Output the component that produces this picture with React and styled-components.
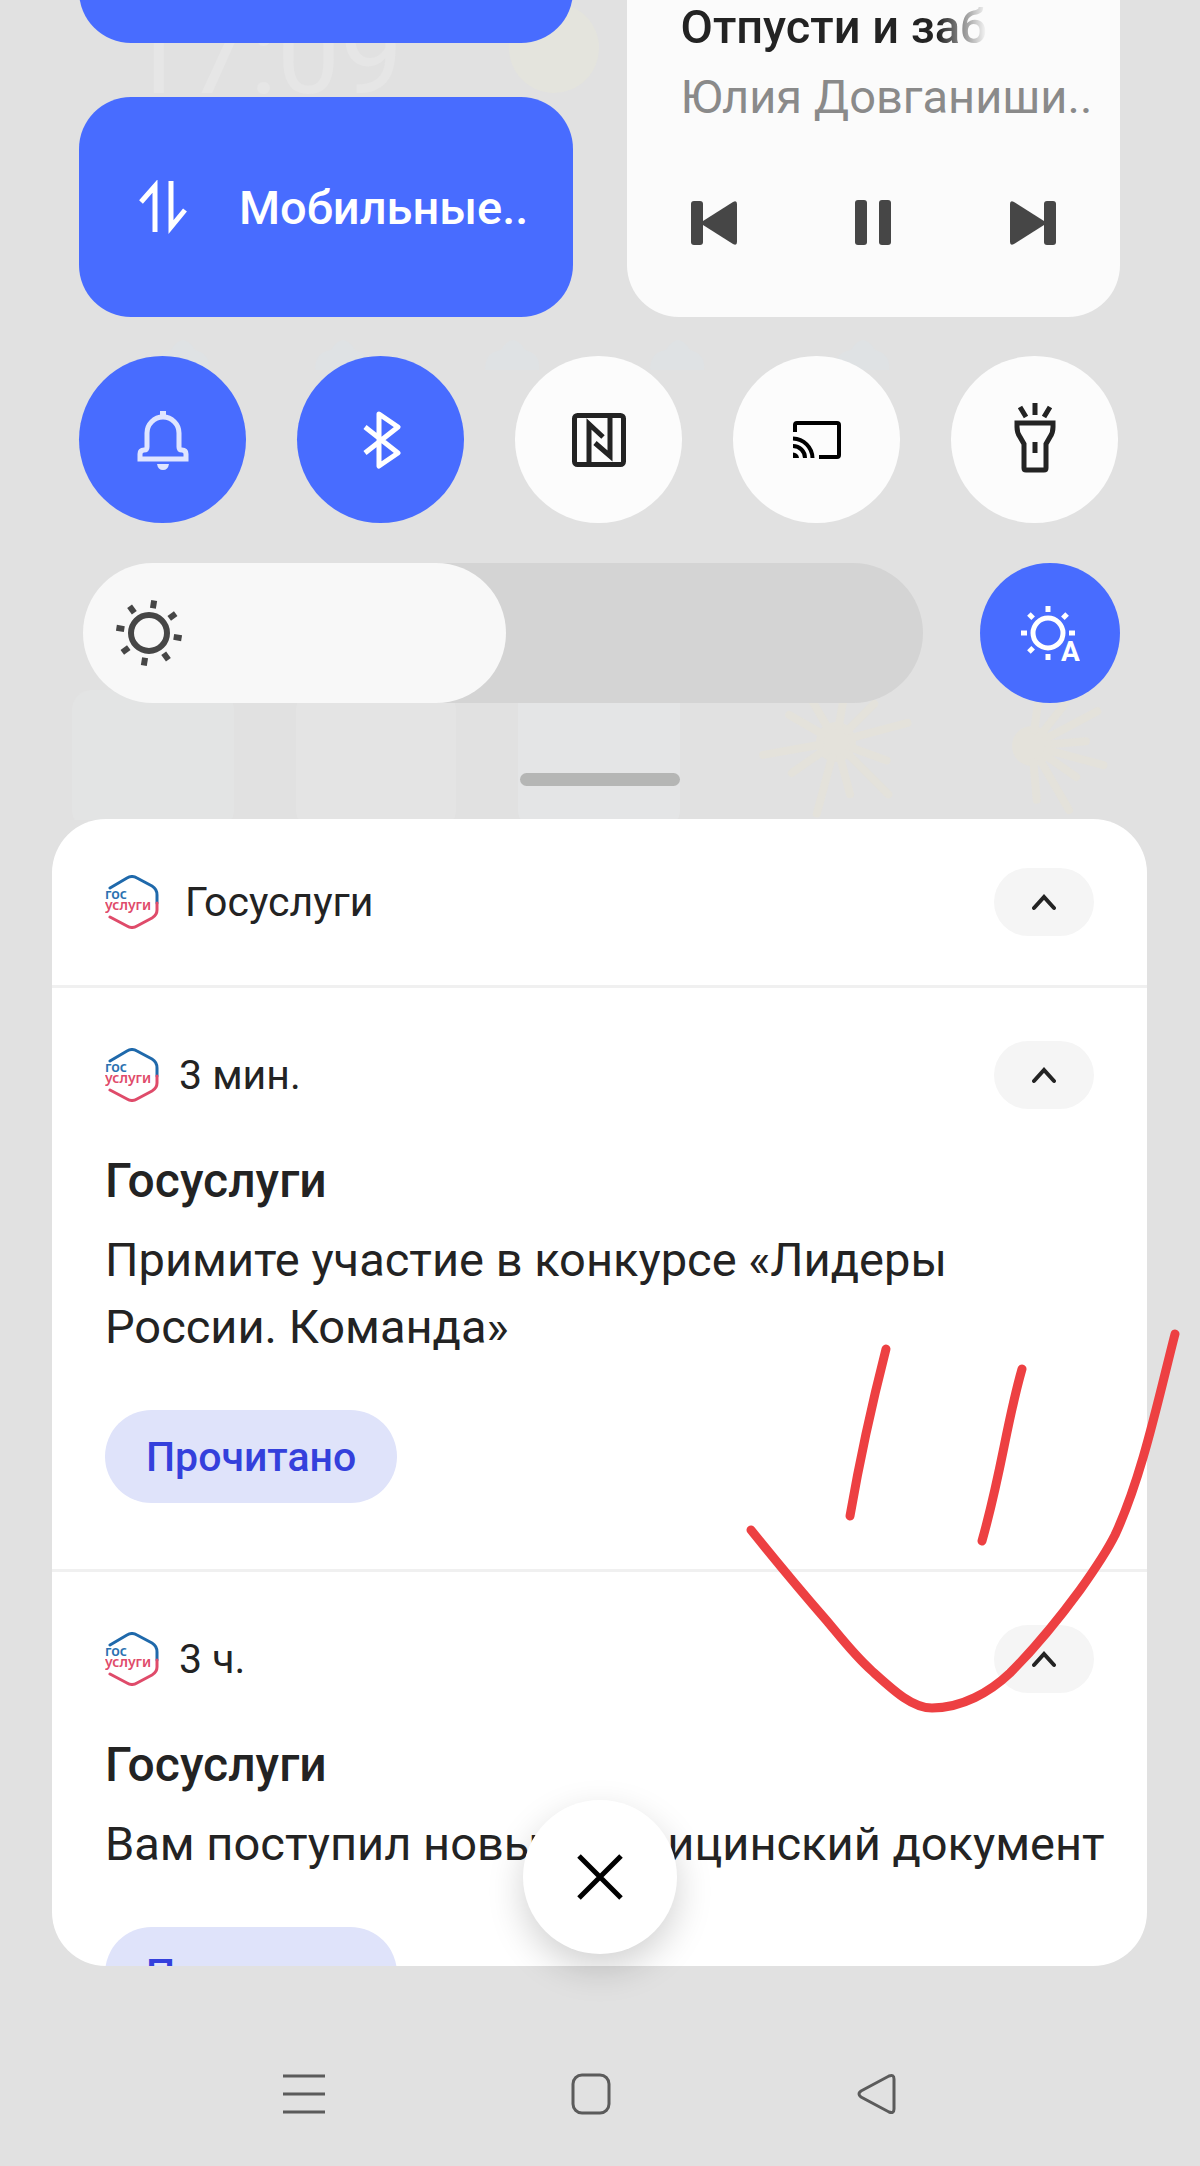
import React, { useState } from 'react';
import styled, { createGlobalStyle } from 'styled-components';

const GlobalStyle = createGlobalStyle`
  * {
    box-sizing: border-box;
  }

  body {
    margin: 0;
    background: #e1e1e1;
    font-family: Roboto, "Liberation Sans", sans-serif;
    color: #232323;
  }

  button {
    border: 0;
    padding: 0;
    font: inherit;
    color: inherit;
    cursor: pointer;
  }

  svg {
    display: block;
  }
`;

const Screen = styled.div`
  position: relative;
  display: flex;
  flex-direction: column;
  height: 100vh;
  overflow: hidden;
`;

const Wallpaper = styled.svg`
  position: absolute;
  top: 0;
  left: 0;
  z-index: -1;
`;

const QuickSettings = styled.section`
  flex: none;
  display: flex;
  flex-direction: column;
  padding: 0 80px 0 79px;
`;

/* the shade is scrolled, so the first row of tiles starts above the screen */
const Tiles = styled.div`
  display: grid;
  grid-template-columns: repeat(2, minmax(0, 1fr));
  grid-template-rows: 220px 220px;
  gap: 54px;
  margin-top: -177px;
`;

const Tile = styled.button`
  display: flex;
  align-items: center;
  gap: 52px;
  padding: 0 32px 0 60px;
  border-radius: 52px;
  background: #486cff;
  color: #fff;
  font-size: 47px;
  font-weight: 500;
  text-align: left;
  white-space: nowrap;
`;

const MediaCard = styled.article`
  grid-column: 2;
  grid-row: 1 / 3;
  display: flex;
  flex-direction: column;
  justify-content: flex-end;
  padding: 0 32px 72px 54px;
  border-radius: 52px;
  background: #fbfbfb;
  white-space: nowrap;
`;

const Track = styled.div`
  width: 306px;
  overflow: hidden;
  font-size: 47px;
  line-height: 70px;
  font-weight: 500;
  mask-image: linear-gradient(to right, #000 84%, transparent);
`;

const Artist = styled.div`
  font-size: 47px;
  line-height: 70px;
  color: #8a8a8a;
`;

const Controls = styled.div`
  display: flex;
  justify-content: space-between;
  margin-top: 68px;
  padding: 0 32px 0 10px;
  color: #464646;
`;

const PlainButton = styled.button`
  background: none;
`;

const Toggles = styled.div`
  display: flex;
  justify-content: space-between;
  margin-top: 39px;
  padding-right: 2px;
`;

const RoundButton = styled.button`
  flex: none;
  display: grid;
  place-items: center;
  width: ${props => props.$size}px;
  height: ${props => props.$size}px;
  border-radius: 50%;
  background: ${props => (props.$on ? '#486cff' : '#fcfcfc')};
  color: ${props => (props.$on ? '#fff' : '#232323')};
`;

const BrightnessRow = styled.div`
  display: flex;
  gap: 57px;
  margin-top: 40px;
  padding-left: 4px;
`;

const SliderBox = styled.label`
  flex: 1;
  display: grid;
  align-items: center;

  > * {
    grid-area: 1 / 1;
  }

  > svg {
    margin-left: 32px;
    color: #464646;
    pointer-events: none;
  }
`;

const Slider = styled.input`
  appearance: none;
  width: 100%;
  height: 140px;
  margin: 0;
  border-radius: 70px;
  overflow: hidden;
  background: linear-gradient(to right, #f8f8f8 var(--fill), #d4d4d4 var(--fill));

  &::-webkit-slider-thumb {
    appearance: none;
    width: 140px;
    height: 140px;
    border-radius: 50%;
    background: #f8f8f8;
  }
`;

const Handle = styled.div`
  align-self: center;
  width: 160px;
  height: 13px;
  margin: 70px 0 33px;
  border-radius: 7px;
  background: #b5b6b5;
`;

const Sheet = styled.main`
  flex: 1;
  min-height: 0;
  overflow: hidden;
  margin: 0 53px 0 52px;
  border-radius: 54px;
  background: #fff;
`;

const Group = styled.header`
  display: flex;
  align-items: center;
  gap: 26px;
  height: 169px;
  padding: 0 53px;
  border-bottom: 3px solid #f0f0f0;
  font-size: 41px;
`;

const Notice = styled.article`
  padding: 53px 53px 66px;
  border-bottom: 3px solid #f0f0f0;
`;

const NoticeHead = styled.div`
  display: flex;
  align-items: center;
  gap: 20px;
  height: 68px;
  font-size: 41px;
`;

const Collapse = styled.button`
  display: grid;
  place-items: center;
  width: 100px;
  height: 68px;
  margin-left: auto;
  border-radius: 34px;
  background: #f5f5f5;
`;

const Title = styled.h2`
  margin: 38px 0 12px;
  font-size: 48px;
  line-height: 67px;
  font-weight: 500;
`;

const Text = styled.p`
  margin: 0 -30px 0 0;
  font-size: 47px;
  line-height: 67px;
`;

const ReadButton = styled.button`
  height: 93px;
  margin-top: 50px;
  padding: 0 41px;
  border-radius: 47px;
  background: #dfe3fa;
  color: #3440dc;
  font-size: 41px;
  font-weight: 500;
`;

const CloseButton = styled.button`
  position: absolute;
  left: 50%;
  bottom: 212px;
  display: grid;
  place-items: center;
  width: 154px;
  height: 154px;
  transform: translateX(-50%);
  border-radius: 50%;
  background: #fff;
  color: #000;
  box-shadow: 0 14px 36px rgba(0, 0, 0, 0.18);
`;

const NavBar = styled.nav`
  flex: none;
  display: flex;
  justify-content: center;
  align-items: center;
  gap: 246px;
  height: 200px;
  padding: 56px 20px 0 0;
  color: #5b5b5b;
`;

const Marker = styled.svg`
  position: absolute;
  top: 1320px;
  left: 740px;
  pointer-events: none;
`;

const Stroke = ({ w, h, width = 5, children }) => (
  <svg
    width={w}
    height={h}
    viewBox={`0 0 ${w} ${h}`}
    fill="none"
    stroke="currentColor"
    strokeWidth={width}
    aria-hidden="true"
  >
    {children}
  </svg>
);

const DataIcon = () => (
  <Stroke w={48} h={54}>
    <path d="M2 22L16 6V52" />
    <path d="M32 1V47L46 30" />
  </Stroke>
);

const SkipIcon = ({ next }) => (
  <svg width="46" height="44" viewBox="0 0 46 44" fill="currentColor" aria-hidden="true">
    <g transform={next ? 'matrix(-1 0 0 1 46 0)' : undefined}>
      <rect width="12" height="44" rx="3" />
      <path d="M12 20L42 1Q46 -1 46 3V41Q46 45 42 43L12 24Q9 22 12 20Z" />
    </g>
  </svg>
);

const PauseIcon = () => (
  <svg width="36" height="45" viewBox="0 0 36 45" fill="currentColor" aria-hidden="true">
    <rect width="12" height="45" rx="3" />
    <rect x="24" width="12" height="45" rx="3" />
  </svg>
);

const BellIcon = () => (
  <svg width="52" height="60" viewBox="0 0 52 60" fill="none" stroke="#dfe5ff" strokeWidth="5" aria-hidden="true">
    <path d="M26 1V6" strokeWidth="6" />
    <path d="M10 37V23A16 16 0 0 1 42 23V37Q42 40 45 40Q49 40 49 44V49H3V44Q3 40 7 40Q10 40 10 37Z" />
    <path d="M20 54H32Q31 60 26 60Q21 60 20 54Z" fill="#dfe5ff" stroke="none" />
  </svg>
);

const BluetoothIcon = () => (
  <Stroke w={40} h={60}>
    <path d="M4 17L37 43L18 56V4L37 17L4 43" strokeLinejoin="round" />
  </Stroke>
);

const NfcIcon = () => (
  <Stroke w={54} h={54}>
    <rect x="2.5" y="2.5" width="49" height="49" rx="3" />
    <path d="M17 51V11L31 24" />
    <path d="M38 3V43L23 30" />
  </Stroke>
);

const CastIcon = () => (
  <svg width="50" height="40" viewBox="0 0 50 40" fill="none" stroke="#000" strokeWidth="4" aria-hidden="true">
    <path d="M3 12V5Q3 3 5 3H45Q47 3 47 5V35Q47 37 45 37H27" />
    <path d="M1 18.500A20 20 0 0 1 20.500 38" />
    <path d="M1 26A12 12 0 0 1 13 38" />
    <path d="M1 32.500V38H7A6 6 0 0 0 1 32.500Z" fill="#000" stroke="none" />
  </svg>
);

const TorchIcon = () => (
  <Stroke w={44} h={76} width={5}>
    <path d="M4 21H40V25Q40 31 37 35L33 42V66Q33 68 31 68H13Q11 68 11 66V42L7 35Q4 31 4 25Z" />
    <path d="M22 1V13M7 5L13 15M37 5L31 15M22 40V51" />
  </Stroke>
);

const rays = [0, 45, 90, 135, 180, 225, 270, 315];

const SunIcon = () => (
  <Stroke w={68} h={68} width={6}>
    <circle cx="34" cy="34" r="18" />
    {rays.map(angle => (
      <path key={angle} d="M34 1V9" transform={`rotate(${angle + 9} 34 34)`} />
    ))}
  </Stroke>
);

const AutoSunIcon = () => (
  <Stroke w={60} h={60}>
    <circle cx="28" cy="30" r="15" />
    {rays.filter(angle => angle !== 135).map(angle => (
      <path key={angle} d="M28 3V9" transform={`rotate(${angle} 28 30)`} />
    ))}
    <text x="41" y="58" fill="currentColor" stroke="none" fontSize="28" fontWeight="700" fontFamily="Roboto">A</text>
  </Stroke>
);

const ChevronIcon = () => (
  <Stroke w={24} h={18} width={4}>
    <path d="M2 15L12 4L22 15" strokeLinecap="round" />
  </Stroke>
);

const Logo = () => (
  <svg width="54" height="54" viewBox="0 0 54 54" fill="none" strokeWidth="3" strokeLinecap="round" aria-hidden="true">
    <path stroke="#1f69ab" d="M5 13L22 3Q27 0 32 3L47 11Q52 14 52 20V28" />
    <path stroke="#df4b6a" d="M52 28V35Q52 40 47 43L32 51Q27 54 22 51L5 42" />
    <g fontFamily="Noto Sans" fontWeight="600" fontSize="14">
      <text x="0" y="24" fill="#2a71b0">гос</text>
      <text x="0" y="35" fill="#df4b6a">услуги</text>
    </g>
  </svg>
);

const Cloud = ({ x }) => <path fill="#dfe2e4" d={`M${x} 370Q${x} 352 ${x + 16} 350Q${x + 28} 330 ${x + 40} 350Q${x + 56} 354 ${x + 54} 370Z`} />;

const Burst = ({ x, y, angles }) => (
  <g stroke="#e4e2db" strokeWidth="8" strokeLinecap="round">
    <circle cx={x} cy={y} r="20" fill="#e4e2db" stroke="none" />
    {angles.map((angle, i) => (
      <path key={angle} d={`M${x} ${y - 16}V${y - (i % 2 ? 54 : 74)}`} transform={`rotate(${angle} ${x} ${y})`} />
    ))}
  </g>
);

const Backdrop = () => (
  <Wallpaper width="1200" height="820" viewBox="0 0 1200 820" aria-hidden="true">
    <text x="124" y="93" fill="#e6e6e6" fontFamily="Roboto" fontSize="112">17:09</text>
    <circle cx="554" cy="48" r="45" fill="#e4e4dd" />
    {[155, 315, 485, 650, 835].map(x => <Cloud key={x} x={x} />)}
    <rect x="72" y="690" width="162" height="140" rx="20" fill="#e3e4e4" />
    <rect x="296" y="690" width="160" height="140" rx="20" fill="#e4e4e4" />
    <rect x="518" y="680" width="162" height="150" rx="20" fill="#e4e5e6" />
    <Burst x={836} y={742} angles={[10, 45, 75, 110, 135, 165, 195, 235, 260, 300, 330]} />
    <Burst x={1032} y={746} angles={[8, 38, 62, 85, 105, 125, 150, 175]} />
  </Wallpaper>
);

const toggles = [
  { label: 'Звук', on: true, icon: <BellIcon /> },
  { label: 'Bluetooth', on: true, icon: <BluetoothIcon /> },
  { label: 'NFC', on: false, icon: <NfcIcon /> },
  { label: 'Трансляция', on: false, icon: <CastIcon /> },
  { label: 'Фонарик', on: false, icon: <TorchIcon /> }
];

const notices = [
  { time: '3 мин.', text: 'Примите участие в конкурсе «Лидеры России. Команда»' },
  { time: '3 ч.', text: 'Вам поступил новый медицинский документ' }
];

const Notification = props => (
  <Notice>
    <NoticeHead>
      <Logo />
      <span>{props.time}</span>
      <Collapse aria-label="Свернуть"><ChevronIcon /></Collapse>
    </NoticeHead>
    <Title>Госуслуги</Title>
    <Text>{props.text}</Text>
    <ReadButton>Прочитано</ReadButton>
  </Notice>
);

const App = () => {
  const [brightness, setBrightness] = useState(103);

  return (
    <Screen>
      <GlobalStyle />
      <Backdrop />

      <QuickSettings>
        <Tiles>
          <Tile aria-label="Wi-Fi" />
          <Tile><DataIcon />Мобильные..</Tile>
          <MediaCard>
            <Track>Отпусти и забудь</Track>
            <Artist>Юлия Довганиши..</Artist>
            <Controls>
              <PlainButton aria-label="Назад"><SkipIcon /></PlainButton>
              <PlainButton aria-label="Пауза"><PauseIcon /></PlainButton>
              <PlainButton aria-label="Вперёд"><SkipIcon next /></PlainButton>
            </Controls>
          </MediaCard>
        </Tiles>

        <Toggles>
          {toggles.map(item => (
            <RoundButton key={item.label} $size={167} $on={item.on} aria-label={item.label} aria-pressed={item.on}>
              {item.icon}
            </RoundButton>
          ))}
        </Toggles>

        <BrightnessRow>
          <SliderBox>
            <Slider
              type="range"
              max="255"
              aria-label="Яркость"
              value={brightness}
              onChange={e => setBrightness(Number(e.target.value))}
              style={{ '--fill': `calc(70px + (100% - 140px) * ${brightness / 255})` }}
            />
            <SunIcon />
          </SliderBox>
          <RoundButton $size={140} $on aria-label="Автояркость" aria-pressed="true"><AutoSunIcon /></RoundButton>
        </BrightnessRow>

        <Handle />
      </QuickSettings>

      <Sheet>
        <Group>
          <Logo />
          <span>Госуслуги</span>
          <Collapse aria-label="Свернуть"><ChevronIcon /></Collapse>
        </Group>
        {notices.map(item => <Notification key={item.time} {...item} />)}
      </Sheet>

      <NavBar>
        <PlainButton aria-label="Меню">
          <Stroke w={42} h={42} width={3}><path d="M0 3H42M0 21H42M0 39H42" /></Stroke>
        </PlainButton>
        <PlainButton aria-label="Домой">
          <Stroke w={40} h={42} width={3}><rect x="2" y="2" width="36" height="38" rx="9" /></Stroke>
        </PlainButton>
        <PlainButton aria-label="Назад">
          <Stroke w={40} h={42} width={3}><path d="M4 18L32 3Q37 1 37 6V36Q37 41 32 39L4 24Q0 21 4 18Z" /></Stroke>
        </PlainButton>
      </NavBar>

      <CloseButton aria-label="Закрыть">
        <Stroke w={46} h={46} width={5}><path d="M2 2L44 44M44 2L2 44" /></Stroke>
      </CloseButton>

      <Marker width="450" height="400" viewBox="740 1320 450 400" fill="none" stroke="#ed4042" strokeWidth="9" strokeLinecap="round" strokeLinejoin="round" aria-hidden="true">
        <path d="M886 1349Q864 1435 850 1516" />
        <path d="M1022 1369C1006 1425 1002 1470 982 1541" />
        <path d="M751 1530C780 1566 800 1590 827 1621C842 1639 855 1656 872 1671C893 1690 912 1708 932 1708C962 1708 990 1692 1010 1673C1038 1645 1058 1620 1080 1590C1095 1569 1106 1553 1115 1535C1142 1477 1158 1400 1175 1334" />
      </Marker>
    </Screen>
  );
};

export default App;
